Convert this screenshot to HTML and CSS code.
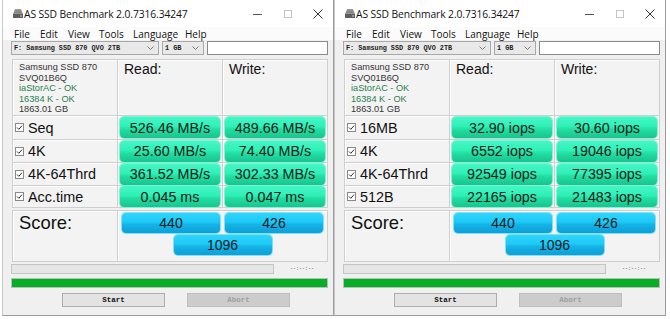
FILE: index.html
```html
<!DOCTYPE html>
<html>
<head>
<meta charset="utf-8">
<link rel="stylesheet" href="styles.css">
</head>
<body>
<div class="screen">
  <div class="win">
    <div class="titlebar">
      <svg class="appicon" width="10" height="9" viewBox="0 0 10 9"><polygon points="2,0 8,0 10,5 0,5" fill="#9a9a9a"/><polygon points="0,5 10,5 10,9 0,9" fill="#5e5e5e"/><line x1="2" y1="2" x2="8" y2="2" stroke="#7a7a7a" stroke-width="0.8"/><line x1="1" y1="3.6" x2="9" y2="3.6" stroke="#7a7a7a" stroke-width="0.8"/><rect x="7" y="6.5" width="2" height="1" fill="#ccc"/></svg>
      <span class="title">AS SSD Benchmark 2.0.7316.34247</span>
      <div class="controls">
        <span class="ctl"><svg width="10" height="10" viewBox="0 0 10 10"><line x1="0" y1="5.5" x2="9" y2="5.5" stroke="#555" stroke-width="1"/></svg></span>
        <span class="ctl"><svg width="10" height="10" viewBox="0 0 10 10"><rect x="1.5" y="1.5" width="7" height="7" fill="none" stroke="#c4c4c4" stroke-width="1"/></svg></span>
        <span class="ctl"><svg width="10" height="10" viewBox="0 0 10 10"><path d="M0.5 0.5 L9.5 9.5 M9.5 0.5 L0.5 9.5" stroke="#333" stroke-width="1"/></svg></span>
      </div>
    </div>
    <div class="menu"><span class="m1">File</span><span class="m2">Edit</span><span class="m3">View</span><span class="m4">Tools</span><span class="m5">Language</span><span>Help</span></div>
    <div class="toolbar">
      <div class="combo drive"><span class="ctext">F: Samsung SSD 870 QVO 2TB</span><svg class="chev" width="7" height="4" viewBox="0 0 7 4"><path d="M0.5 0.5 L3.5 3.5 L6.5 0.5" fill="none" stroke="#777" stroke-width="1"/></svg></div>
      <div class="combo size"><span class="ctext">1 GB</span><svg class="chev" width="7" height="4" viewBox="0 0 7 4"><path d="M0.5 0.5 L3.5 3.5 L6.5 0.5" fill="none" stroke="#777" stroke-width="1"/></svg></div>
      <div class="textbox"></div>
    </div>
    <div class="panel">
      <div class="grid">
        <div class="cell info">
          <div>Samsung SSD 870</div>
          <div>SVQ01B6Q</div>
          <div class="ok">iaStorAC - OK</div>
          <div class="ok">16384 K - OK</div>
          <div>1863.01 GB</div>
        </div>
        <div class="cell head">Read:</div>
        <div class="cell head">Write:</div>

        <div class="cell label"><svg class="chk" width="9" height="9" viewBox="0 0 9 9"><rect x="0.5" y="0.5" width="8" height="8" fill="#fff" stroke="#8a8a8a"/><path d="M2 4.5 L3.8 6.3 L7 2.6" fill="none" stroke="#333" stroke-width="1"/></svg>Seq</div>
        <div class="cell val"><div class="gbox">526.46 MB/s</div></div>
        <div class="cell val"><div class="gbox">489.66 MB/s</div></div>

        <div class="cell label"><svg class="chk" width="9" height="9" viewBox="0 0 9 9"><rect x="0.5" y="0.5" width="8" height="8" fill="#fff" stroke="#8a8a8a"/><path d="M2 4.5 L3.8 6.3 L7 2.6" fill="none" stroke="#333" stroke-width="1"/></svg>4K</div>
        <div class="cell val"><div class="gbox">25.60 MB/s</div></div>
        <div class="cell val"><div class="gbox">74.40 MB/s</div></div>

        <div class="cell label"><svg class="chk" width="9" height="9" viewBox="0 0 9 9"><rect x="0.5" y="0.5" width="8" height="8" fill="#fff" stroke="#8a8a8a"/><path d="M2 4.5 L3.8 6.3 L7 2.6" fill="none" stroke="#333" stroke-width="1"/></svg>4K-64Thrd</div>
        <div class="cell val"><div class="gbox">361.52 MB/s</div></div>
        <div class="cell val"><div class="gbox">302.33 MB/s</div></div>

        <div class="cell label"><svg class="chk" width="9" height="9" viewBox="0 0 9 9"><rect x="0.5" y="0.5" width="8" height="8" fill="#fff" stroke="#8a8a8a"/><path d="M2 4.5 L3.8 6.3 L7 2.6" fill="none" stroke="#333" stroke-width="1"/></svg>Acc.time</div>
        <div class="cell val"><div class="gbox">0.045 ms</div></div>
        <div class="cell val"><div class="gbox">0.047 ms</div></div>
      </div>
      <div class="score">
        <div class="cell score-label">Score:</div>
        <div class="cell score-vals">
          <div class="bbox">440</div>
          <div class="bbox">426</div>
          <div class="bbox">1096</div>
        </div>
      </div>
    </div>
    <div class="progress-row"><div class="progress"></div><span class="time">--:--:--</span></div>
    <div class="bar"></div>
    <div class="buttons"><div class="btn">Start</div><div class="btn off">Abort</div></div>
  </div>

  <div class="win">
    <div class="titlebar">
      <svg class="appicon" width="10" height="9" viewBox="0 0 10 9"><polygon points="2,0 8,0 10,5 0,5" fill="#9a9a9a"/><polygon points="0,5 10,5 10,9 0,9" fill="#5e5e5e"/><line x1="2" y1="2" x2="8" y2="2" stroke="#7a7a7a" stroke-width="0.8"/><line x1="1" y1="3.6" x2="9" y2="3.6" stroke="#7a7a7a" stroke-width="0.8"/><rect x="7" y="6.5" width="2" height="1" fill="#ccc"/></svg>
      <span class="title">AS SSD Benchmark 2.0.7316.34247</span>
      <div class="controls">
        <span class="ctl"><svg width="10" height="10" viewBox="0 0 10 10"><line x1="0" y1="5.5" x2="9" y2="5.5" stroke="#555" stroke-width="1"/></svg></span>
        <span class="ctl"><svg width="10" height="10" viewBox="0 0 10 10"><rect x="1.5" y="1.5" width="7" height="7" fill="none" stroke="#c4c4c4" stroke-width="1"/></svg></span>
        <span class="ctl"><svg width="10" height="10" viewBox="0 0 10 10"><path d="M0.5 0.5 L9.5 9.5 M9.5 0.5 L0.5 9.5" stroke="#333" stroke-width="1"/></svg></span>
      </div>
    </div>
    <div class="menu"><span class="m1">File</span><span class="m2">Edit</span><span class="m3">View</span><span class="m4">Tools</span><span class="m5">Language</span><span>Help</span></div>
    <div class="toolbar">
      <div class="combo drive"><span class="ctext">F: Samsung SSD 870 QVO 2TB</span><svg class="chev" width="7" height="4" viewBox="0 0 7 4"><path d="M0.5 0.5 L3.5 3.5 L6.5 0.5" fill="none" stroke="#777" stroke-width="1"/></svg></div>
      <div class="combo size"><span class="ctext">1 GB</span><svg class="chev" width="7" height="4" viewBox="0 0 7 4"><path d="M0.5 0.5 L3.5 3.5 L6.5 0.5" fill="none" stroke="#777" stroke-width="1"/></svg></div>
      <div class="textbox"></div>
    </div>
    <div class="panel">
      <div class="grid">
        <div class="cell info">
          <div>Samsung SSD 870</div>
          <div>SVQ01B6Q</div>
          <div class="ok">iaStorAC - OK</div>
          <div class="ok">16384 K - OK</div>
          <div>1863.01 GB</div>
        </div>
        <div class="cell head">Read:</div>
        <div class="cell head">Write:</div>

        <div class="cell label"><svg class="chk" width="9" height="9" viewBox="0 0 9 9"><rect x="0.5" y="0.5" width="8" height="8" fill="#fff" stroke="#8a8a8a"/><path d="M2 4.5 L3.8 6.3 L7 2.6" fill="none" stroke="#333" stroke-width="1"/></svg>16MB</div>
        <div class="cell val"><div class="gbox">32.90 iops</div></div>
        <div class="cell val"><div class="gbox">30.60 iops</div></div>

        <div class="cell label"><svg class="chk" width="9" height="9" viewBox="0 0 9 9"><rect x="0.5" y="0.5" width="8" height="8" fill="#fff" stroke="#8a8a8a"/><path d="M2 4.5 L3.8 6.3 L7 2.6" fill="none" stroke="#333" stroke-width="1"/></svg>4K</div>
        <div class="cell val"><div class="gbox">6552 iops</div></div>
        <div class="cell val"><div class="gbox">19046 iops</div></div>

        <div class="cell label"><svg class="chk" width="9" height="9" viewBox="0 0 9 9"><rect x="0.5" y="0.5" width="8" height="8" fill="#fff" stroke="#8a8a8a"/><path d="M2 4.5 L3.8 6.3 L7 2.6" fill="none" stroke="#333" stroke-width="1"/></svg>4K-64Thrd</div>
        <div class="cell val"><div class="gbox">92549 iops</div></div>
        <div class="cell val"><div class="gbox">77395 iops</div></div>

        <div class="cell label"><svg class="chk" width="9" height="9" viewBox="0 0 9 9"><rect x="0.5" y="0.5" width="8" height="8" fill="#fff" stroke="#8a8a8a"/><path d="M2 4.5 L3.8 6.3 L7 2.6" fill="none" stroke="#333" stroke-width="1"/></svg>512B</div>
        <div class="cell val"><div class="gbox">22165 iops</div></div>
        <div class="cell val"><div class="gbox">21483 iops</div></div>
      </div>
      <div class="score">
        <div class="cell score-label">Score:</div>
        <div class="cell score-vals">
          <div class="bbox">440</div>
          <div class="bbox">426</div>
          <div class="bbox">1096</div>
        </div>
      </div>
    </div>
    <div class="progress-row"><div class="progress"></div><span class="time">--:--:--</span></div>
    <div class="bar"></div>
    <div class="buttons"><div class="btn">Start</div><div class="btn off">Abort</div></div>
  </div>
</div>
</body>
</html>
```

FILE: styles.css
```css
html, body {
  margin: 0;
  padding: 0;
  background: #ffffff;
}
.screen {
  display: flex;
  padding-left: 2px;
  width: 670px;
  height: 319px;
  box-sizing: border-box;
  overflow: hidden;
}
.win {
  width: 332px;
  height: 316px;
  box-sizing: border-box;
  border: 1px solid #9c9c9c;
  border-top: none;
  border-left-color: #c8c8c8;
  background: #f0f0f0;
  display: flex;
  flex-direction: column;
  font-family: "Liberation Sans", Arial, sans-serif;
  color: #111;
}
.titlebar {
  height: 27px;
  background: #ffffff;
  display: flex;
  align-items: center;
  padding-left: 10px;
}
.appicon {
  flex: none;
  margin-right: 1px;
  margin-top: -1px;
}
.title {
  font-family: "Open Sans", "Noto Sans", sans-serif;
  font-size: 10.3px;
  color: #111;
  letter-spacing: -0.1px;
}
.controls {
  margin-left: auto;
  display: flex;
  height: 27px;
}
.ctl {
  width: 30px;
  display: flex;
  align-items: center;
  justify-content: center;
}
.menu {
  height: 13px;
  background: #fbfbfb;
  display: flex;
  align-items: center;
  padding-left: 11px;
  font-family: "Open Sans", "Noto Sans", sans-serif;
  font-size: 10px;
  color: #111;
}
.menu .m1 { width: 26px; }
.menu .m2 { width: 28px; }
.menu .m3 { width: 31px; }
.menu .m4 { width: 34px; }
.menu .m5 { width: 52px; }
.toolbar {
  margin-top: 1px;
  height: 14px;
  display: flex;
  padding-left: 8px;
}
.combo {
  box-sizing: border-box;
  height: 14px;
  border: 1px solid #a8a8a8;
  background: #e9e9e9;
  display: flex;
  align-items: center;
  padding-left: 2px;
  padding-right: 4px;
}
.combo.drive { width: 148px; }
.combo.size { width: 42px; margin-left: 3px; }
.ctext {
  font-family: "Liberation Mono", monospace;
  font-size: 6.8px;
  font-weight: bold;
  color: #222;
  white-space: nowrap;
}
.chev { margin-left: auto; }
.textbox {
  box-sizing: border-box;
  width: 121px;
  height: 14px;
  margin-left: 3px;
  border: 1px solid #8a8a8a;
  background: #fff;
}
.panel {
  margin-top: 4px;
  margin-left: 9px;
  width: 316px;
}
.grid {
  display: grid;
  grid-template-columns: 104px 104px 104px;
  grid-template-rows: 55px 23px 22px 22px 21px;
  gap: 1px;
  padding: 1px;
  background: #cfcfcf;
}
.cell {
  background: #f3f3f3;
  box-shadow: inset 1px 1px 0 #ffffff;
  box-sizing: border-box;
}
.info {
  padding: 2px 0 0 6px;
  font-size: 9.2px;
  line-height: 10.5px;
  color: #333;
}
.info .ok { color: #2c7e52; }
.head {
  font-size: 14px;
  padding: 1px 0 0 6px;
  line-height: 16px;
  color: #111;
}
.label {
  display: flex;
  align-items: center;
  padding-left: 2px;
  font-size: 14.4px;
  color: #111;
}
.chk { margin-right: 4px; flex: none; }
.val {
  display: flex;
  align-items: center;
  justify-content: center;
}
.gbox {
  width: 100px;
  height: 21px;
  border-radius: 4px;
  background: linear-gradient(to bottom, #45f6c6 0%, #2ff0b6 45%, #22dea3 58%, #18c48d 100%);
  box-shadow: 0 0 0 1px #7cf3d2;
  display: flex;
  align-items: center;
  justify-content: center;
  font-size: 14.3px;
  color: #142019;
}
.score {
  margin-top: 2px;
  display: grid;
  grid-template-columns: 104px 209px;
  gap: 1px;
  padding: 1px;
  height: 52px;
  box-sizing: border-box;
  background: #cfcfcf;
}
.score-label {
  font-size: 18.4px;
  padding: 2px 0 0 6px;
  line-height: 20px;
  color: #111;
}
.score-vals {
  display: flex;
  flex-wrap: wrap;
  justify-content: center;
  align-content: flex-start;
  column-gap: 5px;
  row-gap: 2px;
  padding-top: 2px;
}
.bbox {
  width: 98px;
  height: 20px;
  border-radius: 4px;
  background: linear-gradient(to bottom, #2fd6fb 0%, #1ec9f6 45%, #14b3e6 58%, #0f9fd6 100%);
  box-shadow: 0 0 0 1px #7fe0fb;
  display: flex;
  align-items: center;
  justify-content: center;
  font-size: 14px;
  color: #0e1a22;
}
.progress-row {
  margin-top: 2px;
  height: 10px;
  display: flex;
  align-items: center;
  padding-left: 8px;
}
.progress {
  box-sizing: border-box;
  width: 263px;
  height: 10px;
  border: 1px solid #c4c4c4;
  background: #e6e6e6;
}
.time {
  margin-left: 16px;
  font-family: "Liberation Mono", monospace;
  font-size: 5px;
  color: #444;
}
.bar {
  box-sizing: border-box;
  margin-top: 4px;
  margin-left: 8px;
  width: 317px;
  height: 10px;
  border: 1px solid #bcbcbc;
  background: #06b025;
}
.buttons {
  margin-top: 5px;
  display: flex;
  padding-left: 59px;
  gap: 22px;
}
.btn {
  box-sizing: border-box;
  width: 103px;
  height: 14px;
  border: 1px solid #adadad;
  background: #e3e3e3;
  display: flex;
  align-items: center;
  justify-content: center;
  font-family: "Liberation Mono", monospace;
  font-size: 7.5px;
  font-weight: bold;
  color: #111;
}
.btn.off {
  background: #cccccc;
  border-color: #bfbfbf;
  color: #a0a0a0;
}
```
